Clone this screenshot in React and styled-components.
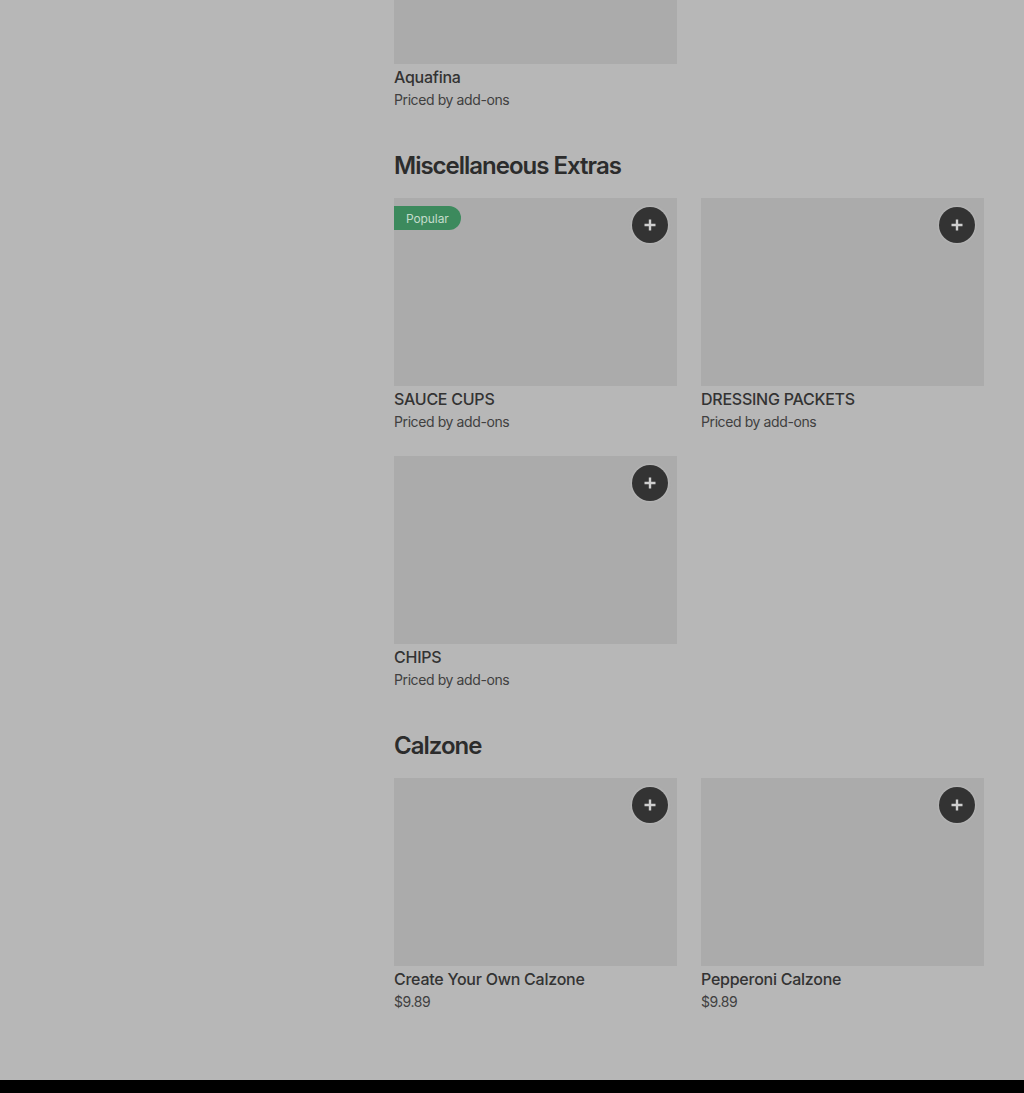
import React from 'react';
import styled, { createGlobalStyle } from 'styled-components';

const GlobalStyle = createGlobalStyle`
  html, body {
    margin: 0;
    padding: 0;
    background: #b7b7b7;
  }
  body {
    font-family: Inter, "Noto Sans", sans-serif;
    color: #333;
    -webkit-font-smoothing: antialiased;
  }
`;

// Whole page, left column is the (empty) category rail
const Page = styled.div`
  display: grid;
  grid-template-columns: 394px 590px;
  overflow: hidden;
`;

const Sidebar = styled.aside``;

const Menu = styled.main`
  display: flex;
  flex-direction: column;
  gap: 40px;
  margin-top: -124px;
`;

const Section = styled.section`
  display: flex;
  flex-direction: column;
  gap: 16px;
`;

const SectionTitle = styled.h2`
  margin: 0;
  font-size: 24px;
  line-height: 32px;
  font-weight: 600;
  letter-spacing: -1px;
  color: #2c2c2c;
`;

const Grid = styled.div`
  display: grid;
  grid-template-columns: repeat(2, 283px);
  column-gap: 24px;
  row-gap: 24px;
`;

const Card = styled.div`
  display: flex;
  flex-direction: column;
`;

const Thumb = styled.div`
  position: relative;
  height: 188px;
  background: #ababab;
`;

const Badge = styled.span`
  position: absolute;
  top: 8px;
  left: 0;
  height: 24px;
  padding: 0 12px;
  display: flex;
  align-items: center;
  background: #3c8a5d;
  color: #c4dccc;
  font-size: 12px;
  letter-spacing: -0.1px;
  border-radius: 0 12px 12px 0;
`;

const AddButton = styled.button`
  position: absolute;
  top: 9px;
  right: 9px;
  width: 36px;
  height: 36px;
  border: none;
  padding: 0;
  border-radius: 50%;
  background: #333;
  box-shadow: 0 0 2px 1px rgba(190, 190, 190, 0.7);
  display: flex;
  align-items: center;
  justify-content: center;
  cursor: pointer;
`;

const ItemName = styled.div`
  margin-top: 3px;
  font-size: 16px;
  line-height: 20px;
  font-weight: 500;
  letter-spacing: -0.25px;
  color: #333;
`;

const ItemMeta = styled.div`
  margin-top: 3px;
  font-size: 14px;
  line-height: 20px;
  letter-spacing: -0.4px;
  color: #404040;
`;

const Footer = styled.footer`
  margin-top: 68px;
  height: 240px;
  background: #000;
`;

const Plus = () => (
  <svg width="14" height="14" viewBox="0 0 14 14">
    <path d="M7 1.5v11M1.5 7h11" stroke="#cfcfcf" strokeWidth="2.4" />
  </svg>
);

const sections = [
  {
    title: null,
    items: [{ name: 'Aquafina', meta: 'Priced by add-ons' }],
  },
  {
    title: 'Miscellaneous Extras',
    items: [
      { name: 'SAUCE CUPS', meta: 'Priced by add-ons', popular: true },
      { name: 'DRESSING PACKETS', meta: 'Priced by add-ons' },
      { name: 'CHIPS', meta: 'Priced by add-ons' },
    ],
  },
  {
    title: 'Calzone',
    items: [
      { name: 'Create Your Own Calzone', meta: '$9.89' },
      { name: 'Pepperoni Calzone', meta: '$9.89' },
    ],
  },
];

const MenuItem = ({ item, showAdd }) => (
  <Card>
    <Thumb>
      {item.popular && <Badge>Popular</Badge>}
      {showAdd && (
        <AddButton aria-label="Add">
          <Plus />
        </AddButton>
      )}
    </Thumb>
    <ItemName>{item.name}</ItemName>
    <ItemMeta>{item.meta}</ItemMeta>
  </Card>
);

const App = () => (
  <>
    <GlobalStyle />
    <Page>
      <Sidebar />
      <Menu>
        {sections.map((s, i) => (
          <Section key={i}>
            {s.title && <SectionTitle>{s.title}</SectionTitle>}
            <Grid>
              {s.items.map((item) => (
                <MenuItem key={item.name} item={item} showAdd={!!s.title} />
              ))}
            </Grid>
          </Section>
        ))}
      </Menu>
    </Page>
    <Footer />
  </>
);

export default App;
